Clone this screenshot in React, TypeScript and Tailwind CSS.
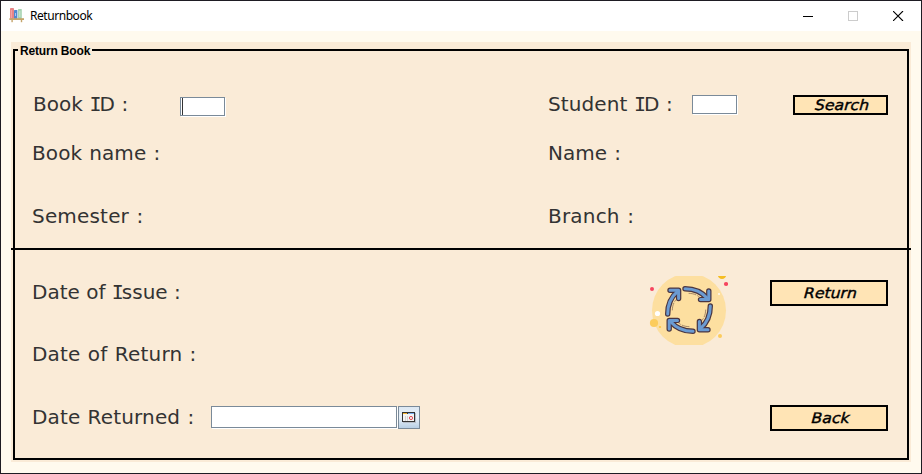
import type { ReactNode } from "react";

const SANS = "font-['DejaVu_Sans',Verdana,sans-serif]";

function Cap({ children }: { children: ReactNode }) {
  return <span className="mr-[-2px] font-['DejaVu_Sans_Mono',monospace]">{children}</span>;
}

function Label({ children, className = "" }: { children: ReactNode; className?: string }) {
  return (
    <span className={`${SANS} whitespace-nowrap text-[20px] leading-[40px] text-[#333333] ${className}`}>{children}</span>
  );
}

function Field({ className = "", children }: { className?: string; children?: ReactNode }) {
  return (
    <div className={`shrink-0 border border-[#7a8a99] bg-white shadow-[1px_1px_0_#ffffff] ${className}`}>{children}</div>
  );
}

function Button({ children, className = "" }: { children: ReactNode; className?: string }) {
  return (
    <button
      className={`flex shrink-0 items-center justify-center border-2 border-black bg-[#ffe4b5] pt-px pl-[3px] ${className}`}
    >
      <span
        className={`${SANS} -skew-x-3 scale-x-[1.08] text-[14.5px] leading-none text-black italic [-webkit-text-stroke:0.4px_black]`}
      >
        {children}
      </span>
    </button>
  );
}

function BooksIcon() {
  return (
    <svg className="shrink-0" width="16" height="16" viewBox="0 0 16 16">
      <rect x="1" y="0" width="4" height="11" rx="0.8" fill="#e88486" />
      <rect x="1.8" y="2" width="1.2" height="8" fill="#f3a3a3" />
      <rect x="5" y="2" width="3.4" height="9" rx="0.5" fill="#5288cf" />
      <rect x="6" y="5" width="1" height="3" fill="#a9c8ef" />
      <rect x="9" y="1" width="3.8" height="10" rx="0.6" fill="#a6d3b2" />
      <rect x="10.3" y="3" width="1" height="6" fill="#cfe9d3" />
      <rect x="0.4" y="10.2" width="14.6" height="1.8" fill="#c5a56c" />
      <rect x="2.4" y="12" width="1.4" height="2.2" fill="#c5a56c" />
      <rect x="11.8" y="12" width="1.4" height="2.2" fill="#c5a56c" />
    </svg>
  );
}

function CycleArt() {
  return (
    <svg width="80" height="69" viewBox="0 0 80 69">
      <circle cx="41" cy="34.5" r="37" fill="#fddfa0" />
      <circle cx="4" cy="13" r="2" fill="#f6455f" />
      <circle cx="78" cy="8" r="2.1" fill="#f6455f" />
      <circle cx="74" cy="-1.2" r="4.2" fill="#f5bd23" />
      <circle cx="71" cy="18" r="1.1" fill="#fff8ed" />
      <circle cx="9.5" cy="37.5" r="2.6" fill="#ffffff" />
      <circle cx="6" cy="47" r="4.1" fill="#fccc5c" />
      <circle cx="12" cy="51" r="1.1" fill="#fcc545" />
      <circle cx="72" cy="60" r="2" fill="#fccc5c" />
      {[0, 90, 180, 270].map((angle) => (
        <g key={angle} transform={`rotate(${angle} 41 34)`} fill="none" strokeLinecap="round" strokeLinejoin="round">
          <g stroke="#4a3540" strokeWidth="5.4">
            <path d="M19.7 38 C19.7 28 23 21 29.5 15.5" />
            <path d="M22 14.2 L30.6 14.2 L30.6 22.5" />
          </g>
          <g stroke="#6b9bd2" strokeWidth="3">
            <path d="M19.7 38 C19.7 28 23 21 29.5 15.5" />
            <path d="M22 14.2 L30.6 14.2 L30.6 22.5" />
          </g>
          <path d="M24.3 34 C24.5 29 26 26 28.3 23.4" stroke="#7d6051" strokeWidth="0.7" strokeDasharray="7 2" />
        </g>
      ))}
    </svg>
  );
}

function CalendarIcon() {
  return (
    <svg width="14" height="11" viewBox="0 0 14 11">
      <rect x="1" y="1" width="13" height="10" fill="#b6bdc7" />
      <rect width="13" height="10" fill="#333333" />
      <rect x="1" y="1" width="4" height="1" fill="#f5b52f" />
      <rect x="6" y="1" width="6" height="1" fill="#78aef0" />
      <rect x="1" y="2" width="11" height="7" fill="#f4f4f4" />
      <path d="M3.5 4v5M5.5 4v5" stroke="#d4d4d4" />
      <circle cx="9" cy="6" r="1.6" fill="none" stroke="#e24c55" />
    </svg>
  );
}

export default function App() {
  return (
    <div className="flex h-[474px] w-[922px] flex-col overflow-hidden border border-[#1e1c23] bg-[#fffaee]">
      <header className="flex h-[30px] shrink-0 items-center bg-white pl-2">
        <BooksIcon />
        <span className="ml-[5px] font-['Noto_Sans','Open_Sans',sans-serif] text-[12px] tracking-[-0.45px] text-black">
          Returnbook
        </span>
        <div className="mr-[17px] ml-auto flex items-center gap-[35px]">
          <svg width="10" height="10" viewBox="0 0 10 10" shapeRendering="crispEdges">
            <path d="M0 5.5h10" stroke="#000" />
          </svg>
          <svg width="10" height="10" viewBox="0 0 10 10" shapeRendering="crispEdges">
            <rect x="0.5" y="0.5" width="9" height="9" fill="none" stroke="#cccccc" />
          </svg>
          <svg width="11" height="10" viewBox="0 0 11 10">
            <path d="M0 0l10 10M10 0l-10 10" stroke="#000" strokeWidth="1.1" />
          </svg>
        </div>
      </header>

      <main className="mt-[11px] ml-[10px] h-[420px] w-[900px] shrink-0 bg-[#faebd7] px-[2px]">
        <fieldset className="h-[418px] w-[896px] min-w-0 border-2 border-black">
          <legend className="ml-[3px] h-[16px] px-[2px] font-['Liberation_Sans',Arial,sans-serif] text-[12px] leading-[18px] font-bold tracking-[-0.17px] text-black">
            Return Book
          </legend>

          <section className="flex h-[190px] pt-[26px]">
            <div className="w-[515px] pl-[17px]">
              <div className="flex h-[40px]">
                <Label className="w-[148px] pl-[1px] [word-spacing:0.3px]">
                  Book <Cap>I</Cap>D :
                </Label>
                <Field className="mt-[13px] h-[19px] w-[45px] pl-[1px]">
                  <div className="h-full w-px bg-[#333333]" />
                </Field>
              </div>
              <div className="mt-[9px] flex h-[40px]">
                <Label className="tracking-[0.1px] [word-spacing:0.6px]">Book name :</Label>
              </div>
              <div className="mt-[23px] flex h-[40px]">
                <Label className="tracking-[0.18px] [word-spacing:1px]">Semester :</Label>
              </div>
            </div>
            <div className="flex-1 pl-[18px]">
              <div className="flex h-[40px]">
                <Label className="w-[144px] tracking-[0.1px]">
                  Student <Cap>I</Cap>D :
                </Label>
                <Field className="mt-[11px] h-[19px] w-[45px]" />
                <Button className="mt-[11px] mr-[19px] ml-auto h-[20px] w-[95px]">Search</Button>
              </div>
              <div className="mt-[9px] flex h-[40px]">
                <Label className="[word-spacing:1px]">Name :</Label>
              </div>
              <div className="mt-[23px] flex h-[40px]">
                <Label className="tracking-[0.2px] [word-spacing:1px]">Branch :</Label>
              </div>
            </div>
          </section>

          <div className="-mx-[4px] h-[2px] bg-black" />

          <section className="flex h-[208px] pt-[22px] pr-[19px] pl-[17px]">
            <div className="w-[616px]">
              <div className="flex h-[40px]">
                <Label>
                  Date of <Cap>I</Cap>ssue :
                </Label>
              </div>
              <div className="mt-[22px] flex h-[40px]">
                <Label className="tracking-[0.2px] [word-spacing:0.7px]">Date of Return :</Label>
              </div>
              <div className="mt-[23px] flex h-[40px]">
                <Label className="w-[179px] tracking-[0.15px] [word-spacing:0.7px]">Date Returned :</Label>
                <Field className="mt-[9px] h-[22px] w-[186px]" />
                <button className="mt-[9px] ml-[1px] flex h-[23px] w-[22px] items-center justify-center border border-[#7a8a99] bg-linear-to-b from-[#dde8f3] via-[#e9f1f8] to-[#b8cfe5]">
                  <CalendarIcon />
                </button>
              </div>
            </div>
            <div className="pt-[4px]">
              <CycleArt />
            </div>
            <div className="ml-auto flex flex-col gap-[99px] pt-[8px]">
              <Button className="h-[26px] w-[118px]">Return</Button>
              <Button className="h-[26px] w-[118px]">Back</Button>
            </div>
          </section>
        </fieldset>
      </main>
    </div>
  );
}
